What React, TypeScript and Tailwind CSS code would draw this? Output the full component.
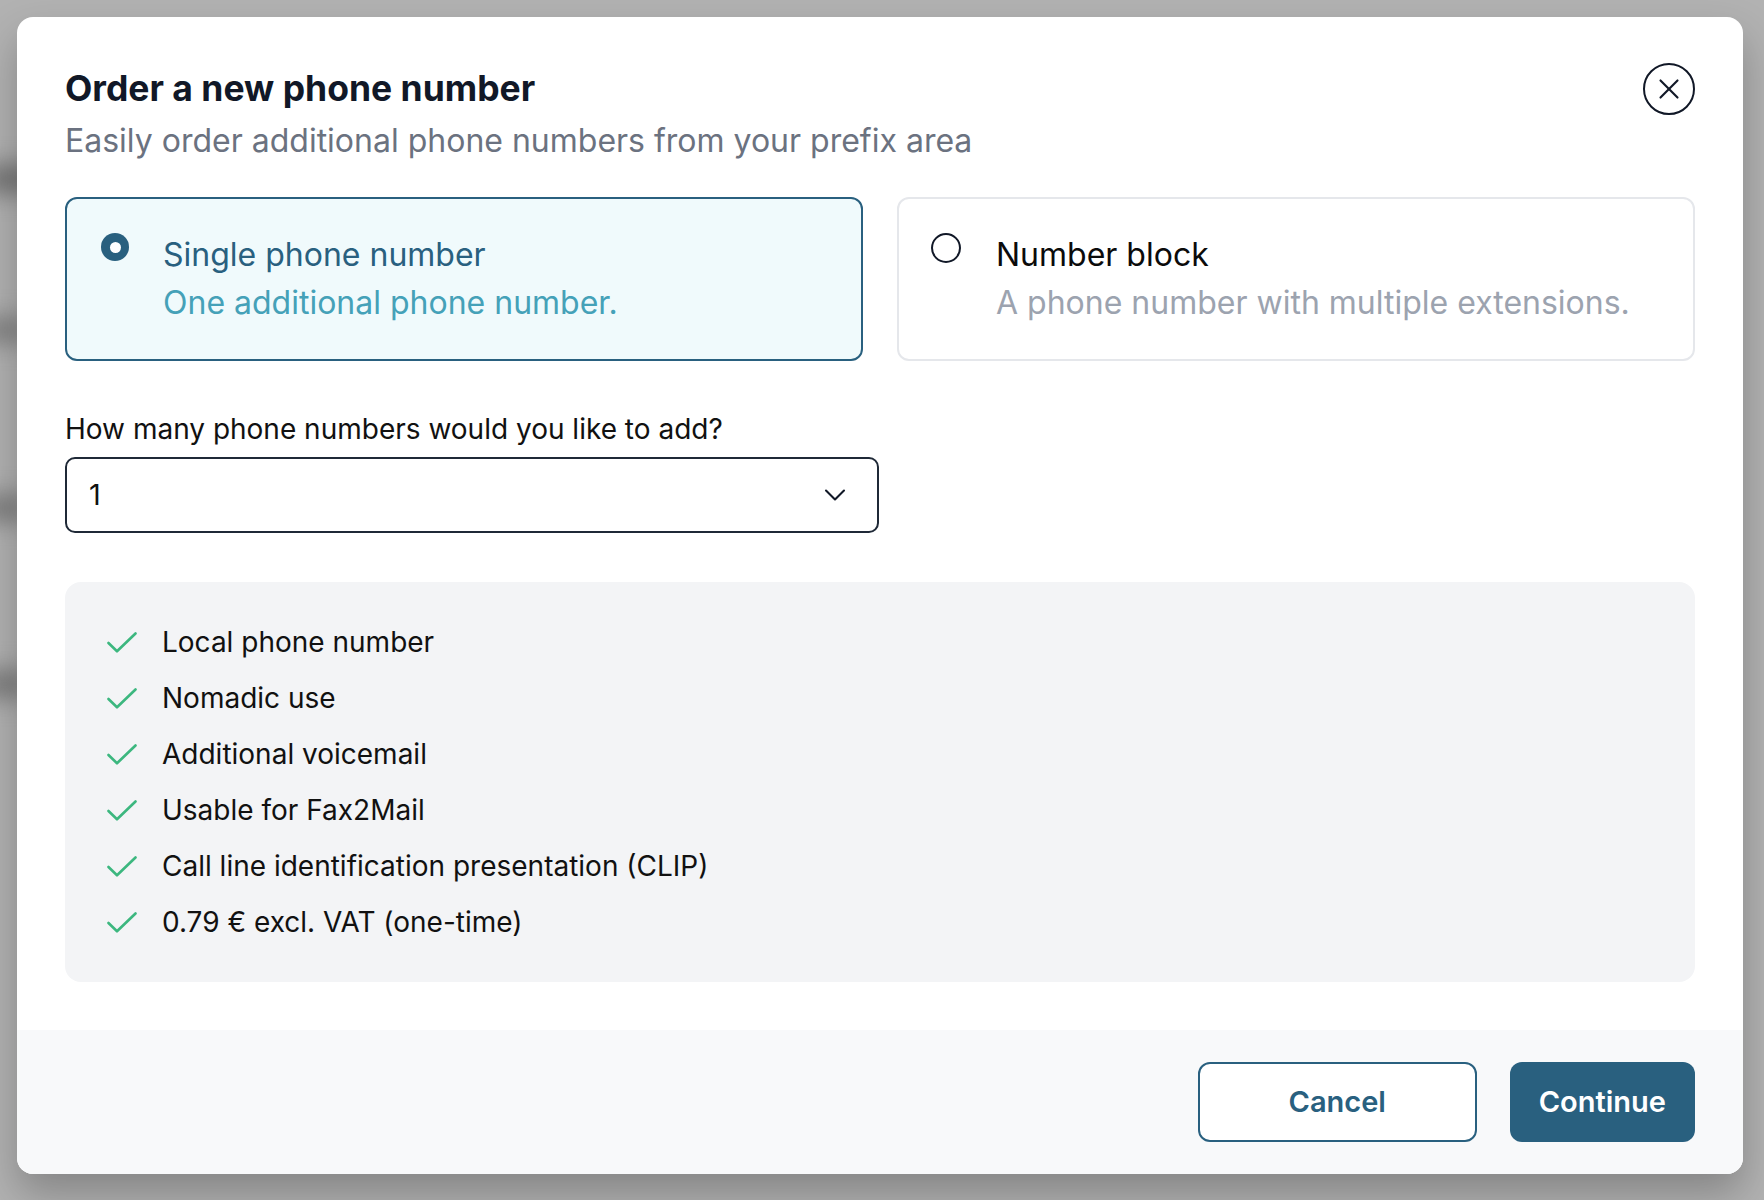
import React, { useState } from "react";
import { X, ChevronDown } from "lucide-react";

const features = [
  "Local phone number",
  "Nomadic use",
  "Additional voicemail",
  "Usable for Fax2Mail",
  "Call line identification presentation (CLIP)",
  "0.79 € excl. VAT (one-time)",
];

type Kind = "single" | "block";

const CheckMark = () => (
  <svg width="30" height="21" viewBox="0 0 30 21" fill="none" className="shrink-0">
    <polyline
      points="1.5,11 10,19.3 28.5,1.5"
      stroke="#3cb77f"
      strokeWidth="2.6"
      strokeLinecap="round"
      strokeLinejoin="round"
    />
  </svg>
);

const OptionCard = ({
  active,
  title,
  description,
  onClick,
}: {
  active: boolean;
  title: string;
  description: string;
  onClick: () => void;
}) => (
  <button
    type="button"
    onClick={onClick}
    className={`flex items-start gap-[34px] rounded-xl border-2 px-[34px] py-[36px] text-left ${
      active ? "border-[#29607f] bg-[#f0fafc]" : "border-[#e5e7eb] bg-white"
    }`}
  >
    {active ? (
      <span className="mt-[-2px] flex size-[28px] shrink-0 items-center justify-center rounded-full bg-[#29607f]">
        <span className="size-[11px] rounded-full bg-white" />
      </span>
    ) : (
      <span className="mt-[-2px] ml-[-2px] mr-[1px] size-[30px] shrink-0 rounded-full border-2 border-[#111827] bg-white" />
    )}
    <span className="flex flex-col gap-2">
      <span
        className={`text-[32px] leading-[40px] ${active ? "text-[#29607f]" : "text-[#0b0b0b]"}`}
      >
        {title}
      </span>
      <span
        className={`text-[32px] leading-[40px] ${active ? "text-[#45a1b8]" : "text-[#9ca3af]"}`}
      >
        {description}
      </span>
    </span>
  </button>
);

export default function App() {
  const [kind, setKind] = useState<Kind>("single");

  return (
    <div
      className="relative min-h-screen overflow-hidden bg-[#b2b2b2] pl-[17px] pt-[17px] pb-[27px]"
      style={{ fontFamily: "Inter, 'Noto Sans', sans-serif" }}
    >
      {/* blurred page behind the overlay */}
      <div className="pointer-events-none absolute inset-0">
        <div className="absolute left-[-20px] top-[165px] h-[28px] w-[60px] rounded-full bg-[#707070] blur-md" />
        <div className="absolute left-[-20px] top-[318px] h-[24px] w-[50px] rounded-full bg-[#7a7a7a] blur-md" />
        <div className="absolute left-[-20px] top-[495px] h-[26px] w-[50px] rounded-full bg-[#777] blur-md" />
        <div className="absolute left-[-20px] top-[670px] h-[28px] w-[50px] rounded-full bg-[#777] blur-md" />
      </div>

      <div className="relative w-[1726px] overflow-hidden rounded-2xl bg-white shadow-[0_20px_40px_rgba(0,0,0,0.25)]">
        <div className="px-12 pt-12 pb-12">
          {/* header */}
          <div className="flex items-start justify-between">
            <div>
              <h2 className="text-[35.5px] font-bold leading-[48px] text-[#111827]">
                Order a new phone number
              </h2>
              <p className="mt-2 text-[32px] leading-[40px] text-[#6b7280]">
                Easily order additional phone numbers from your prefix area
              </p>
            </div>
            <button
              type="button"
              className="-mt-0.5 flex size-[52px] items-center justify-center rounded-full border-2 border-[#111827] text-[#111827]"
            >
              <X size={34} strokeWidth={1.5} />
            </button>
          </div>

          {/* type choice */}
          <div className="mt-9 grid grid-cols-2 gap-[34px]">
            <OptionCard
              active={kind === "single"}
              title="Single phone number"
              description="One additional phone number."
              onClick={() => setKind("single")}
            />
            <OptionCard
              active={kind === "block"}
              title="Number block"
              description="A phone number with multiple extensions."
              onClick={() => setKind("block")}
            />
          </div>

          {/* amount */}
          <label className="mt-12 block text-[28px] leading-[40px] text-[#111]">
            How many phone numbers would you like to add?
          </label>
          <div className="mt-2 flex h-[76px] w-[814px] items-center justify-between rounded-[10px] border-2 border-[#1f2937] pl-[22px] pr-[24px]">
            <span className="text-[29px] text-[#111]">1</span>
            <ChevronDown size={36} strokeWidth={1.4} className="text-[#111827]" />
          </div>

          {/* included features */}
          <ul className="mt-[49px] flex flex-col gap-4 rounded-2xl bg-[#f3f4f6] py-[40px] pl-[42px]">
            {features.map((f) => (
              <li key={f} className="flex h-[40px] items-center gap-[25px]">
                <CheckMark />
                <span className="text-[28px] leading-[40px] text-[#111]">{f}</span>
              </li>
            ))}
          </ul>
        </div>

        {/* footer */}
        <div className="flex justify-end gap-[33px] bg-[#f8f9fa] px-12 py-8">
          <button
            type="button"
            className="h-[80px] w-[279px] rounded-xl border-2 border-[#29607f] bg-white text-[29px] font-semibold text-[#29607f]"
          >
            Cancel
          </button>
          <button
            type="button"
            className="h-[80px] rounded-xl bg-[#29607f] px-[29px] text-[29px] font-semibold text-white"
          >
            Continue
          </button>
        </div>
      </div>
    </div>
  );
}
